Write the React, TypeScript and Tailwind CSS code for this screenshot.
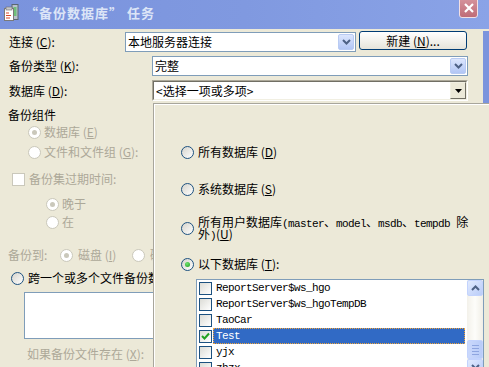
import React from 'react';

type ToggleProps = { checked?: boolean; disabled?: boolean };

function Radio({ checked, disabled }: ToggleProps) {
  return (
    <span
      className={
        disabled
          ? 'flex h-[13px] w-[13px] shrink-0 items-center justify-center rounded-full border border-[#cac8bb] bg-white'
          : 'flex h-[13px] w-[13px] shrink-0 items-center justify-center rounded-full border border-[#1c5180] bg-linear-to-br from-[#d6d4cc] to-white'
      }
    >
      {checked && (
        <span
          className={
            disabled
              ? 'h-[5px] w-[5px] rounded-full bg-[#cac8bb]'
              : 'h-[5px] w-[5px] rounded-full bg-[radial-gradient(circle_at_40%_35%,#6fe46f,#1f9a1f)]'
          }
        />
      )}
    </span>
  );
}

function Checkbox({ checked, disabled }: ToggleProps) {
  return (
    <span
      className={
        disabled
          ? 'flex h-[13px] w-[13px] shrink-0 items-center justify-center border border-[#cac8bb] bg-white'
          : 'flex h-[13px] w-[13px] shrink-0 items-center justify-center border border-[#1c5180] bg-linear-to-br from-[#dcdcd6] to-white'
      }
    >
      {checked && (
        <svg width="9" height="9" viewBox="0 0 9 9">
          <path d="M1 4 L3.5 6.5 L8 1.5" fill="none" stroke="#21a121" strokeWidth="2" />
        </svg>
      )}
    </span>
  );
}

function XpArrow() {
  return (
    <span className="flex h-[16px] w-[16px] shrink-0 items-center justify-center rounded-[2px] border border-[#b9cbf3] bg-linear-to-b from-[#dce6fd] to-[#b2c6f5]">
      <svg width="9" height="6" viewBox="0 0 9 6">
        <path d="M1 1 L4.5 4.5 L8 1" fill="none" stroke="#4d6185" strokeWidth="2" />
      </svg>
    </span>
  );
}

function ScrollBtn({ up }: { up?: boolean }) {
  return (
    <span className="flex h-[16px] w-[16px] items-center justify-center rounded-[2px] border border-[#c3d3fd] bg-linear-to-br from-[#e1eafe] to-[#b9ccf8]">
      {up ? (
        <svg width="9" height="6" viewBox="0 0 9 6">
          <path d="M1 5 L4.5 1.5 L8 5" fill="none" stroke="#4d6185" strokeWidth="2" />
        </svg>
      ) : (
        <svg width="9" height="6" viewBox="0 0 9 6">
          <path d="M1 1 L4.5 4.5 L8 1" fill="none" stroke="#4d6185" strokeWidth="2" />
        </svg>
      )}
    </span>
  );
}

// half-width ascii, simsun-ish 6px per char
function M({ children }: { children: React.ReactNode }) {
  return <span className="font-['Liberation_Mono',monospace] text-[11px] leading-[7px] tracking-[-0.6px]">{children}</span>;
}

const databases = ['ReportServer$ws_hgo', 'ReportServer$ws_hgoTempDB', 'TaoCar', 'Test', 'yjx', 'zhzx'];

function TitleBar() {
  return (
    <div className="flex h-[29px] items-start bg-linear-to-r from-[#7a93dd] via-[#8099e0] to-[#8aa3e7]">
      <svg className="ml-[3px] mt-[4px]" width="16" height="17" viewBox="0 0 16 17">
        <rect x="9" y="0.5" width="6" height="15" fill="#b9c3cc" stroke="#5b6670" />
        <rect x="10.5" y="3" width="3" height="9" fill="#6fbf7a" />
        <rect x="1.5" y="4.5" width="9" height="12" fill="#fff" stroke="#7a7a7a" />
        <rect x="3" y="3" width="6" height="3" fill="#c9c9c9" stroke="#6d6d6d" strokeWidth="0.6" />
        <path d="M3 9 H6 M3 11.5 H8 M3 14 H7" stroke="#d9482b" strokeWidth="1.2" />
      </svg>
      <span className="ml-[6px] mt-[6px] text-[13px] font-bold leading-none tracking-[1px] text-[#dce5f7]">
        “备份数据库” 任务
      </span>
      <span className="ml-auto mr-[11px] -mt-[3px] flex h-[21px] w-[19px] items-center justify-center rounded-[3px] border border-[#f2dfe3] bg-linear-to-b from-[#d6959e] to-[#bf6c78]">
        <svg width="10" height="10" viewBox="0 0 10 10">
          <path d="M1 1 L9 9 M9 1 L1 9" stroke="#fff" strokeWidth="2.2" />
        </svg>
      </span>
    </div>
  );
}

function Popup() {
  return (
    <div className="absolute left-[153px] top-[103px] h-[264px] w-[336px] overflow-hidden border-l border-t border-[#a8a69c] bg-[#ece9d8] shadow-[inset_1px_1px_0_#ffffff]">
      <div className="mt-[40px] flex h-[16px] items-center pl-[27px]">
        <Radio />
        <span className="ml-[4px]">
          所有数据库 (<u>D</u>)
        </span>
      </div>
      <div className="mt-[21px] flex h-[16px] items-center pl-[27px]">
        <Radio />
        <span className="ml-[4px]">
          系统数据库 (<u>S</u>)
        </span>
      </div>
      <div className="mt-[19px] flex h-[24px] items-center pl-[27px]">
        <Radio />
        <span className="ml-[4px] block whitespace-nowrap leading-[12px]">
          所有用户数据库<M>(master</M>、<M>model</M>、<M>msdb</M>、<M>tempdb </M>除
          <br />
          外<M>)</M>(<u>U</u>)
        </span>
      </div>
      <div className="mt-[16px] flex h-[16px] items-center pl-[27px]">
        <Radio checked />
        <span className="ml-[4px]">
          以下数据库 (<u>T</u>):
        </span>
      </div>
      <div className="ml-[42px] mt-[7px] flex h-[100px] w-[288px] border border-[#7f9db9] bg-white">
        <div className="flex-1">
          {databases.map((name) => {
            const selected = name === 'Test';
            return (
              <div key={name} className="flex h-[16px] items-center">
                <span className="ml-[2px]">
                  <Checkbox checked={selected} />
                </span>
                <div
                  className={
                    selected
                      ? 'ml-[1px] mr-[2px] flex h-full flex-1 items-center border border-dotted border-[#f0a43a] bg-[#316ac5] pl-[2px] text-white'
                      : 'ml-[1px] mr-[2px] flex h-full flex-1 items-center border border-transparent pl-[2px]'
                  }
                >
                  <M>{name}</M>
                </div>
              </div>
            );
          })}
        </div>
        <div className="flex w-[16px] flex-col bg-linear-to-r from-[#f3f1ea] via-[#fdfdfa] to-[#f0eee6]">
          <ScrollBtn up />
          <div className="mt-[44px] flex h-[19px] w-[16px] flex-col items-center justify-center gap-[2px] rounded-[2px] border border-[#c3d3fd] bg-linear-to-r from-[#cad8fc] to-[#b9ccf8]">
            <span className="h-px w-[7px] bg-[#8ea5e0]" />
            <span className="h-px w-[7px] bg-[#8ea5e0]" />
            <span className="h-px w-[7px] bg-[#8ea5e0]" />
            <span className="h-px w-[7px] bg-[#8ea5e0]" />
          </div>
          <ScrollBtn />
        </div>
      </div>
    </div>
  );
}

export default function App() {
  return (
    <div className="relative h-[367px] w-[489px] overflow-hidden bg-[#ece9d8] font-['Noto_Sans_CJK_SC',sans-serif] text-[12px] leading-none text-black">
      <TitleBar />
      <div className="h-[338px] border-r-[6px] border-[#7b94dd]">
        {/* connection */}
        <div className="mt-[2px] flex items-start">
          <span className="flex h-[21px] w-[125px] items-center pl-[9px]">
            连接 (<u>C</u>):
          </span>
          <div className="mt-[1px] flex h-[20px] w-[231px] items-center border border-[#7f9db9] bg-white pl-[2px] pr-[1px]">
            <span className="flex-1">本地服务器连接</span>
            <XpArrow />
          </div>
          <span className="ml-[3px] flex h-[19px] w-[108px] items-center justify-center rounded-[3px] border border-[#003c74] bg-linear-to-b from-white to-[#e6e4da]">
            新建 (<u>N</u>)...
          </span>
        </div>
        {/* backup type */}
        <div className="mt-[4px] flex items-center">
          <span className="w-[152px] pl-[9px]">
            备份类型 (<u>K</u>):
          </span>
          <div className="flex h-[20px] w-[316px] items-center border border-[#7f9db9] bg-white pl-[2px] pr-[1px]">
            <span className="flex-1">完整</span>
            <XpArrow />
          </div>
        </div>
        {/* database */}
        <div className="mt-[4px] flex items-center">
          <span className="w-[152px] pl-[9px]">
            数据库 (<u>D</u>):
          </span>
          <div className="h-[21px] w-[316px] border border-[#aca899] border-b-white border-r-white">
            <div className="flex h-full items-center border border-[#716f64] border-b-[#f1efe2] border-r-[#f1efe2] bg-white pl-[2px]">
              <span className="flex-1">&lt;选择一项或多项&gt;</span>
              <span className="flex h-[17px] w-[16px] items-center justify-center border border-[#f1efe2] border-b-[#716f64] border-r-[#716f64] bg-[#ece9d8]">
                <svg width="7" height="4" viewBox="0 0 7 4">
                  <path d="M0 0 H7 L3.5 4 Z" fill="#000" />
                </svg>
              </span>
            </div>
          </div>
        </div>

        <div className="mt-[6px] flex h-[16px] items-center pl-[8px]">备份组件</div>
        <div className="mt-[1px] flex h-[16px] items-center pl-[28px] text-[#aca899]">
          <Radio checked disabled />
          <span className="ml-[3px]">
            数据库 (<u>E</u>)
          </span>
        </div>
        <div className="mt-[4px] flex h-[16px] items-center pl-[28px] text-[#aca899]">
          <Radio disabled />
          <span className="ml-[3px]">
            文件和文件组 (<u>G</u>):
          </span>
        </div>
        <div className="mt-[11px] flex h-[16px] items-center pl-[12px] text-[#aca899]">
          <Checkbox disabled />
          <span className="ml-[4px]">备份集过期时间:</span>
        </div>
        <div className="mt-[9px] flex h-[16px] items-center pl-[46px] text-[#aca899]">
          <Radio checked disabled />
          <span className="ml-[3px]">晚于</span>
        </div>
        <div className="mt-[2px] flex h-[16px] items-center pl-[46px] text-[#aca899]">
          <Radio disabled />
          <span className="ml-[3px]">在</span>
        </div>
        <div className="mt-[17px] flex h-[16px] items-center text-[#aca899]">
          <span className="w-[60px] pl-[8px]">备份到:</span>
          <Radio checked disabled />
          <span className="ml-[5px] w-[54px]">
            磁盘 (<u>I</u>)
          </span>
          <Radio disabled />
          <span className="ml-[5px]">磁带 (<u>P</u>)</span>
        </div>
        <div className="mt-[7px] flex h-[16px] items-center pl-[11px]">
          <Radio />
          <span className="ml-[4px] whitespace-nowrap">跨一个或多个文件备份数据库 (<u>F</u>):</span>
        </div>
        <div className="ml-[24px] mt-[6px] h-[47px] w-[300px] border border-[#7f9db9] bg-white" />
        <div className="mt-[7px] flex h-[16px] items-center pl-[27px] text-[#aca899]">
          如果备份文件存在 (<u>X</u>):
        </div>
      </div>
      <Popup />
    </div>
  );
}
